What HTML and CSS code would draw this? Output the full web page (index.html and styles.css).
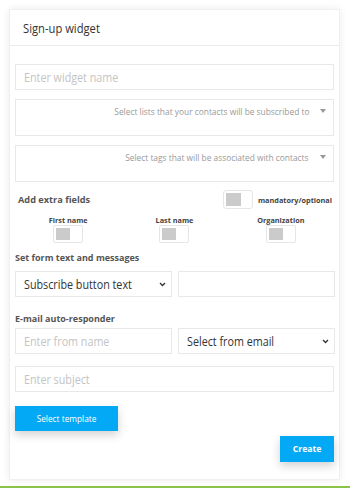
FILE: index.html
```html
<!DOCTYPE html>
<html>
<head>
<meta charset="utf-8">
<link rel="stylesheet" href="styles.css">
</head>
<body>
<div class="page">
  <div class="card">
    <div class="card-header"><span class="sx title">Sign-up widget</span></div>
    <div class="card-body">
      <div class="input first-input"><span class="ph sx">Enter widget name</span></div>
      <div class="multi gap9">
        <span class="multi-text">Select lists that your contacts will be subscribed to</span>
        <svg class="caret" width="6" height="4" viewBox="0 0 6 4"><path d="M0 0H6L3 4Z" fill="#999"/></svg>
      </div>
      <div class="multi gap9">
        <span class="multi-text">Select tags that will be associated with contacts</span>
        <svg class="caret" width="6" height="4" viewBox="0 0 6 4"><path d="M0 0H6L3 4Z" fill="#999"/></svg>
      </div>
      <div class="extra-row">
        <span class="label extra-label">Add extra fields</span>
        <div class="toggle-group">
          <div class="toggle"><span class="knob"></span></div>
          <span class="small-label">mandatory/optional</span>
        </div>
      </div>
      <div class="fields-row">
        <div class="field-col"><span class="small-label">First name</span><div class="check"><span class="knob small"></span></div></div>
        <div class="field-col"><span class="small-label">Last name</span><div class="check"><span class="knob small"></span></div></div>
        <div class="field-col"><span class="small-label">Organization</span><div class="check"><span class="knob small"></span></div></div>
      </div>
      <div class="label section-label form-text-label">Set form text and messages</div>
      <div class="two-col row-a">
        <div class="input select"><span class="val"><span class="sx">Subscribe button text</span></span>
          <svg width="7" height="5" viewBox="0 0 7 5"><path d="M1 1L3.5 3.5L6 1" stroke="#333" stroke-width="1.3" fill="none"/></svg></div>
        <div class="input"></div>
      </div>
      <div class="label section-label responder-label">E-mail auto-responder</div>
      <div class="two-col row-b">
        <div class="input"><span class="ph sx">Enter from name</span></div>
        <div class="input select"><span class="val"><span class="sx">Select from email</span></span>
          <svg width="7" height="5" viewBox="0 0 7 5"><path d="M1 1L3.5 3.5L6 1" stroke="#333" stroke-width="1.3" fill="none"/></svg></div>
      </div>
      <div class="input subject"><span class="ph sx">Enter subject</span></div>
      <div class="btn template-btn">Select template</div>
      <div class="actions"><div class="btn create-btn">Create</div></div>
    </div>
  </div>
</div>
<div class="green-line"></div>
</body>
</html>
```
FILE: styles.css
```css
* { box-sizing: border-box; }
html, body { margin: 0; padding: 0; }
body {
  width: 350px;
  height: 489px;
  background: #fff;
  font-family: "Open Sans", "DejaVu Sans", sans-serif;
  color: #333;
  overflow: hidden;
}
.page {
  padding: 9px 9px 0 9px;
  height: 486px;
}
.card {
  width: 331px;
  height: 471px;
  background: #fff;
  border: 1px solid #f0f0f0;
  box-shadow: 0 0 8px rgba(0,0,0,0.08);
}
.sx {
  display: inline-block;
  white-space: nowrap;
  transform: scaleX(0.86);
  transform-origin: left center;
}
.title { transform: scaleX(0.83); }
.card-header {
  height: 36px;
  border-bottom: 1px solid #eaeaea;
  padding: 0 0 0 13px;
  display: flex;
  align-items: center;
  font-size: 13.5px;
  color: #333;
}
.card-body {
  padding: 0 5px 0 5px;
  display: flex;
  flex-direction: column;
}
.input {
  height: 26px;
  border: 1px solid #e8e8e8;
  background: #fff;
  display: flex;
  align-items: center;
  padding: 0 8px;
  font-size: 12.5px;
}
.first-input { margin-top: 18px; }
.ph { color: #c4c4c4; }
.val { color: #333; flex: 1; }
.select { padding-right: 5px; }
.gap9 { margin-top: 9px; }
.multi {
  height: 37px;
  border: 1px solid #e8e8e8;
  display: flex;
  justify-content: flex-end;
  align-items: flex-start;
  padding: 5px 7px 0 0;
  font-size: 9.2px;
  color: #999;
}
.multi-text {
  line-height: 13px;
  white-space: nowrap;
  display: inline-block;
  transform: scaleX(0.91);
  transform-origin: right center;
}
.caret { margin-left: 11px; margin-top: 4px; }
.label { font-weight: 700; color: #555; }
.extra-row {
  margin-top: 8px;
  height: 19px;
  display: flex;
  align-items: center;
  justify-content: space-between;
}
.extra-label { font-size: 9.2px; margin-left: 3px; }
.toggle-group { display: flex; align-items: center; gap: 5px; margin-right: 2px; }
.toggle {
  width: 30px;
  height: 19px;
  border: 1px solid #e6e6e6;
  border-radius: 3px;
  padding: 2px;
  display: flex;
}
.knob { width: 15px; height: 13px; background: #cbcbcb; }
.small-label { font-weight: 700; color: #444; font-size: 7.3px; }
.fields-row {
  margin-top: 6px;
  display: grid;
  grid-template-columns: 1fr 1fr 1fr;
}
.field-col { display: flex; flex-direction: column; align-items: center; }
.field-col .small-label { line-height: 10px; }
.check {
  width: 30px;
  height: 18px;
  border: 1px solid #e6e6e6;
  border-radius: 2px;
  padding: 2px;
  display: flex;
}
.knob.small { width: 14px; height: 12px; }
.section-label { font-size: 9px; line-height: 12px; }
.form-text-label { margin-top: 9px; }
.row-a { margin-top: 7px; }
.responder-label { margin-top: 16px; }
.row-b { margin-top: 3px; }
.two-col {
  display: grid;
  grid-template-columns: 157px 157px;
  gap: 6px;
}
.subject { margin-top: 12px; }
.btn {
  background: #03a9f4;
  color: #fff;
  display: flex;
  align-items: center;
  justify-content: center;
  box-shadow: 0 4px 10px rgba(0,0,0,0.18);
}
.template-btn {
  margin-top: 14px;
  width: 103px;
  height: 25px;
  font-size: 8.3px;
}
.actions { display: flex; justify-content: flex-end; margin-top: 5px; }
.create-btn {
  width: 54px;
  height: 26px;
  font-size: 8.6px;
  font-weight: 700;
}
.green-line {
  height: 2px;
  background: #8bc34a;
  width: 350px;
}
```
